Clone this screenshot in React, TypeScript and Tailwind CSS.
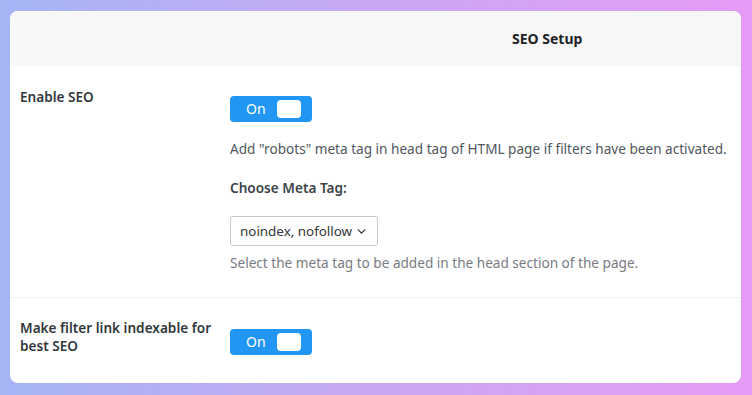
import { ChevronDown } from "lucide-react";

function Toggle() {
  return (
    <div className="flex h-[26px] w-[82px] items-center justify-between rounded-[4px] bg-[#2196f3] pl-[16px] pr-[11px]">
      <span className="text-[14px] leading-none text-white">On</span>
      <span className="h-[18px] w-[24px] rounded-[4px] bg-white" />
    </div>
  );
}

export default function App() {
  return (
    <div
      className="h-[395px] w-[752px] bg-gradient-to-r from-[#a4b5f6] via-[#c9a8f2] to-[#e69bf6] pl-[10px] pr-[11px] pt-[11px] text-[13.6px] text-[#32373c]"
      style={{ fontFamily: '"Noto Sans", "Open Sans", sans-serif' }}
    >
      <div className="h-[372px] overflow-hidden rounded-[8px] bg-white">
        <div className="flex h-[55px] items-center bg-[#f7f7f7] pl-[502px]">
          <span className="text-[14px] font-bold text-[#1d2327]">SEO Setup</span>
        </div>

        {/* enable seo */}
        <div className="flex border-b border-[#f1f1f1] px-[10px] pb-[24px]">
          <div className="w-[210px] shrink-0 pt-[21px] font-semibold leading-[20px]">Enable SEO</div>
          <div className="flex flex-col items-start pt-[30px]">
            <Toggle />
            <p className="mt-[17px] whitespace-nowrap leading-[20px] text-[#50575e]">
              Add "robots" meta tag in head tag of HTML page if filters have been activated.
            </p>
            <p className="mt-[19px] font-semibold leading-[20px] text-[#3c434a]">Choose Meta Tag:</p>
            <div className="mt-[18px] flex h-[30px] w-[148px] items-center justify-between whitespace-nowrap rounded-[3px] border border-[#c8c8c8] pl-[9px] pr-[9px] text-[13.4px] text-[#32373c]">
              <span>noindex, nofollow</span>
              <ChevronDown className="h-[13px] w-[13px] shrink-0" strokeWidth={2.5} />
            </div>
            <p className="mt-[7px] leading-[20px] text-[#787c82]">
              Select the meta tag to be added in the head section of the page.
            </p>
          </div>
        </div>

        {/* indexable */}
        <div className="flex px-[10px]">
          <div className="w-[210px] shrink-0 pt-[21px] font-semibold leading-[18px]">
            Make filter link indexable for best SEO
          </div>
          <div className="pt-[31px]">
            <Toggle />
          </div>
        </div>
      </div>
    </div>
  );
}
